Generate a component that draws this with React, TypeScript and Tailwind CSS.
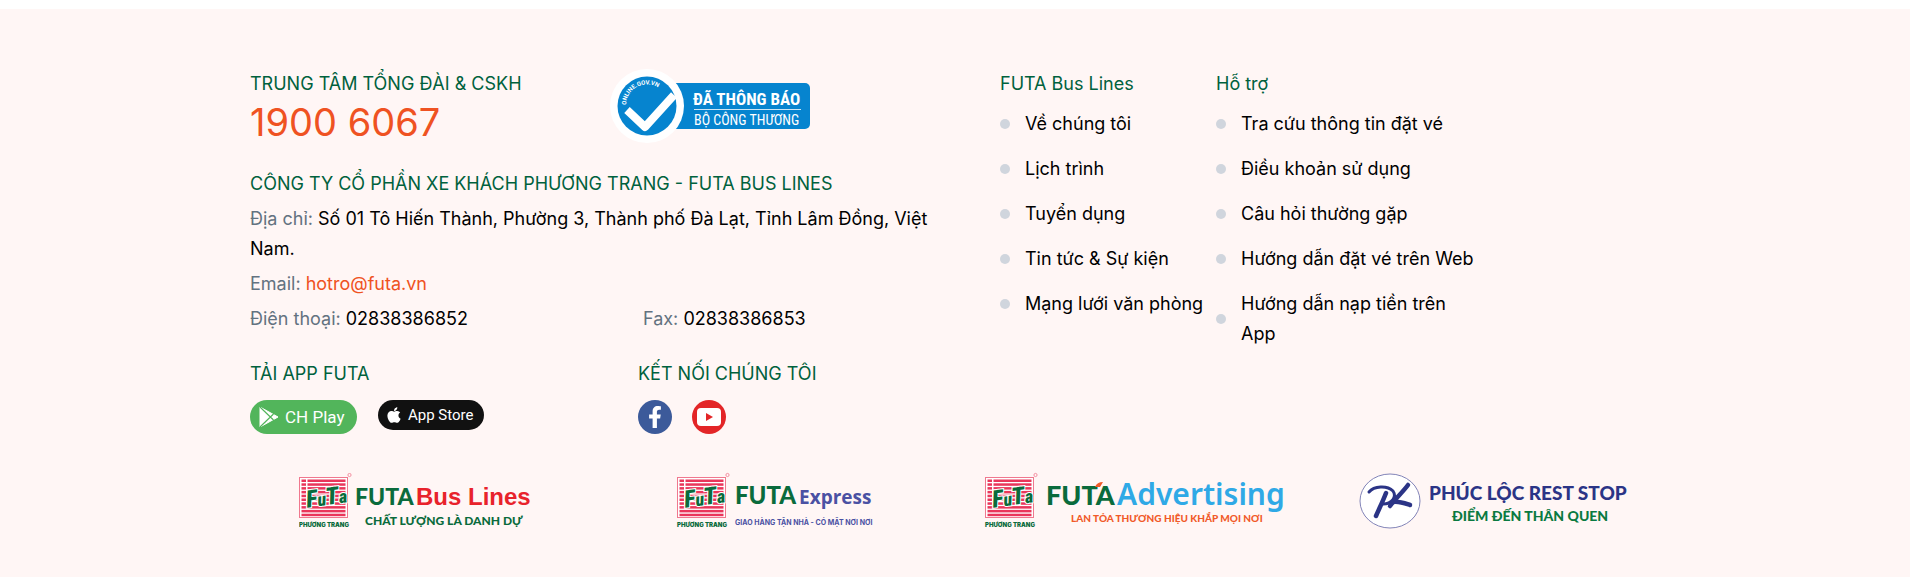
import React from "react";
import { FaApple, FaFacebookF } from "react-icons/fa";

const companyLinks = ["Về chúng tôi", "Lịch trình", "Tuyển dụng", "Tin tức & Sự kiện", "Mạng lưới văn phòng"];
const supportLinks = [
  "Tra cứu thông tin đặt vé",
  "Điều khoản sử dụng",
  "Câu hỏi thường gặp",
  "Hướng dẫn đặt vé trên Web",
  "Hướng dẫn nạp tiền trên App",
];

function LinkList({ title, links, width }: { title: string; links: string[]; width: string }) {
  return (
    <nav aria-label={title} className={width}>
      <h2 className="text-[#00613d]">{title}</h2>
      <ul className="mt-[10px] flex flex-col gap-[15px]">
        {links.map((label) => (
          <li key={label} className="flex items-center gap-[15px]">
            <span className="size-[10px] shrink-0 rounded-full bg-[#d0d5dd]" />
            <a href="#" className="text-black">
              {label}
            </a>
          </li>
        ))}
      </ul>
    </nav>
  );
}

function CertifiedBadge() {
  return (
    <svg width="202" height="74" viewBox="0 0 202 74" role="img" aria-label="Đã thông báo Bộ Công Thương">
      <defs>
        <path id="badge-arc" d="M16 36 A21 21 0 0 1 57 30" />
      </defs>
      <rect x="60" y="14" width="140" height="46" rx="5" fill="#0684cf" />
      <circle cx="37" cy="37" r="37" fill="#fff" />
      <circle cx="37" cy="37" r="29.5" fill="#0684cf" />
      <text fontFamily="Roboto, sans-serif" fontSize="6" fontWeight="700" fill="#fff">
        <textPath href="#badge-arc">ONLINE.GOV.VN</textPath>
      </text>
      <path d="M17 41 L35 58 L64 26" fill="none" stroke="#fff" strokeWidth="8" strokeLinejoin="round" />
      <text x="83" y="36" fontFamily="'Roboto Condensed', Roboto, sans-serif" fontSize="17" fontWeight="700" fill="#fff">
        ĐÃ THÔNG BÁO
      </text>
      <rect x="84" y="40" width="107" height="1" fill="#fff" opacity="0.8" />
      <text x="84" y="56" fontFamily="'Roboto Condensed', Roboto, sans-serif" fontSize="14" fill="#fff">
        BỘ CÔNG THƯƠNG
      </text>
    </svg>
  );
}

function FutaEmblem() {
  const stripes = Array.from({ length: 10 }, (_, i) => 6.5 + i * 3.8);
  return (
    <g>
      <rect x="0.5" y="4.5" width="48" height="40" fill="#fff" stroke="#f0788e" />
      {stripes.map((y) => (
        <rect key={y} x="2.5" y={y} width="44" height="2.5" fill="#e9365a" />
      ))}
      <rect x="7" y="6" width="1.5" height="26" fill="#fff" />
      <g transform="rotate(-8 28 24)">
        <text
          x="7"
          y="32"
          fontFamily="'Roboto Condensed', Roboto, sans-serif"
          fontSize="24"
          fontWeight="900"
          fontStyle="italic"
          fill="#0a6b3c"
          stroke="#fff"
          strokeWidth="2"
          paintOrder="stroke"
        >
          F<tspan fontSize="18">u</tspan>T<tspan fontSize="18">a</tspan>
        </text>
      </g>
      <text x="0" y="54" fontFamily="Inter, sans-serif" fontSize="6" fontWeight="900" fill="#0a6b3c">
        PHƯƠNG TRANG
      </text>
      <circle cx="50.5" cy="2" r="1.6" fill="none" stroke="#f0788e" strokeWidth="0.8" />
    </g>
  );
}

function BusLinesLogo() {
  return (
    <svg width="232" height="56" viewBox="0 0 232 56" role="img" aria-label="FUTA Bus Lines">
      <FutaEmblem />
      <text x="56" y="32" fontFamily="Lato, sans-serif" fontSize="23" fontWeight="900" fill="#0a6b3c">
        FUTA
      </text>
      <text x="117" y="32" fontFamily="'Liberation Sans', sans-serif" fontSize="24" fontWeight="700" fill="#e8222b">
        Bus Lines
      </text>
      <text x="66" y="52" fontFamily="Lato, sans-serif" fontSize="12" fontWeight="900" fill="#0a6b3c">
        CHẤT LƯỢNG LÀ DANH DỰ
      </text>
    </svg>
  );
}

function ExpressLogo() {
  return (
    <svg width="196" height="56" viewBox="0 0 196 56" role="img" aria-label="FUTA Express" className="overflow-visible">
      <FutaEmblem />
      <text x="58" y="31" fontFamily="Lato, sans-serif" fontSize="24" fontWeight="900" fill="#0a6b3c">
        FUTA
      </text>
      <text x="122" y="31" fontFamily="'Open Sans', sans-serif" fontSize="19" fontWeight="700" fill="#4a51a3">
        Express
      </text>
      <text x="58" y="52" fontFamily="Inter, sans-serif" fontSize="7" fontWeight="700" fill="#4a51a3">
        GIAO HÀNG TẬN NHÀ - CÓ MẶT NƠI NƠI
      </text>
    </svg>
  );
}

function AdvertisingLogo() {
  return (
    <svg width="300" height="56" viewBox="0 0 300 56" role="img" aria-label="FUTA Advertising" className="overflow-visible">
      <FutaEmblem />
      <text x="61" y="32" fontFamily="Lato, sans-serif" fontSize="27" fontWeight="900" fill="#0a6b3c">
        FUTA
      </text>
      <path d="M110 14 q2 -5 8 -5 l-3 5 z" fill="#f15a29" />
      <text x="132" y="32" fontFamily="'Noto Sans', sans-serif" fontSize="30" fontWeight="600" fill="#2fa9e6">
        Advertising
      </text>
      <text x="86" y="49" fontFamily="Lato, sans-serif" fontSize="10" fontWeight="900" fill="#f15a29">
        LAN TỎA THƯƠNG HIỆU KHẮP MỌI NƠI
      </text>
    </svg>
  );
}

function RestStopLogo() {
  return (
    <svg width="272" height="56" viewBox="0 0 272 56" role="img" aria-label="Phúc Lộc Rest Stop">
      <ellipse cx="31" cy="28" rx="30" ry="27" fill="#fff" stroke="#8284b8" />
      <g fill="none" stroke="#2b3486" strokeLinecap="round" strokeLinejoin="round">
        <path d="M10 19 C15 13 28 12 34 18 C38 24 33 31 24 31" strokeWidth="3" />
        <path d="M27 20 C24 28 20 36 17 43" strokeWidth="4.5" />
        <path d="M49 12 C43 20 36 26 31 33" strokeWidth="4.5" />
        <path d="M34 29 C40 28 45 30 51 32" strokeWidth="4.5" />
      </g>
      <text x="70" y="27" fontFamily="Lato, sans-serif" fontSize="19" fontWeight="900" fill="#2b3486">
        PHÚC LỘC REST STOP
      </text>
      <text x="93" y="48" fontFamily="Lato, sans-serif" fontSize="14" fontWeight="900" fill="#0a7a41">
        ĐIỂM ĐẾN THÂN QUEN
      </text>
    </svg>
  );
}

export default function App() {
  return (
    <div className="bg-white pt-[9px] font-['Inter',sans-serif] text-[18px] leading-[30px]">
      <footer className="bg-[#fff6f5] px-6 pt-[60px] pb-[48px]">
        <div className="mx-auto max-w-[1410px]">
          <div className="flex">
            <div className="w-[690px] shrink-0">
              <div className="flex h-[100px]">
                <div className="w-[360px]">
                  <h2 className="text-[#00613d]">TRUNG TÂM TỔNG ĐÀI &amp; CSKH</h2>
                  <a href="tel:19006067" className="block text-[38px] leading-[46px] text-[#ef5222]">
                    1900 6067
                  </a>
                </div>
                <a href="#">
                  <CertifiedBadge />
                </a>
              </div>
              <address className="flex flex-col gap-[5px] not-italic">
                <h2 className="text-[#00613d]">CÔNG TY CỔ PHẦN XE KHÁCH PHƯƠNG TRANG - FUTA BUS LINES</h2>
                <p>
                  <span className="text-[#637280]">Địa chỉ: </span>
                  Số 01 Tô Hiến Thành, Phường 3, Thành phố Đà Lạt, Tỉnh Lâm Đồng, Việt Nam.
                </p>
                <p>
                  <span className="text-[#637280]">Email: </span>
                  <a href="mailto:hotro@futa.vn" className="text-[#ef5222]">
                    hotro@futa.vn
                  </a>
                </p>
                <div className="flex">
                  <p className="w-[393px]">
                    <span className="text-[#637280]">Điện thoại: </span>02838386852
                  </p>
                  <p>
                    <span className="text-[#637280]">Fax: </span>02838386853
                  </p>
                </div>
              </address>
              <div className="mt-[25px] flex">
                <section className="w-[388px]">
                  <h2 className="text-[#00613d]">TẢI APP FUTA</h2>
                  <div className="mt-[11px] flex items-start gap-[21px]">
                    <a
                      href="#"
                      className="flex h-[34px] w-[107px] items-center gap-[6px] rounded-full bg-[#52b55b] pl-[9px] font-['Roboto',sans-serif] text-[17px] text-white"
                    >
                      <svg width="20" height="20" viewBox="0 0 20 20" aria-hidden="true">
                        <path d="M1 0 L19 10 L1 20 Z" fill="#fff" stroke="#fff" strokeLinejoin="round" />
                        <path d="M1 0 L14.5 13 M1 20 L14.5 7" stroke="#52b55b" strokeWidth="1.2" />
                      </svg>
                      CH Play
                    </a>
                    <a
                      href="#"
                      className="flex h-[30px] w-[106px] items-center gap-[5px] rounded-full bg-[#111111] pl-[7px] font-['Roboto',sans-serif] text-[15px] text-white"
                    >
                      <FaApple size={18} />
                      App Store
                    </a>
                  </div>
                </section>
                <section>
                  <h2 className="text-[#00613d]">KẾT NỐI CHÚNG TÔI</h2>
                  <div className="mt-[11px] flex gap-[20px]">
                    <a
                      href="#"
                      aria-label="Facebook"
                      className="flex size-[34px] items-center justify-center rounded-full bg-[#3c5a9a] text-white"
                    >
                      <FaFacebookF size={22} />
                    </a>
                    <a
                      href="#"
                      aria-label="YouTube"
                      className="flex size-[34px] items-center justify-center rounded-full bg-[#e32527]"
                    >
                      <svg width="24" height="18" viewBox="0 0 24 18" aria-hidden="true">
                        <rect width="24" height="18" rx="4" fill="#fff" />
                        <path d="M9 5 L16 9 L9 13 Z" fill="#e32527" />
                      </svg>
                    </a>
                  </div>
                </section>
              </div>
            </div>
            <div className="ml-[60px] flex">
              <LinkList title="FUTA Bus Lines" links={companyLinks} width="w-[216px]" />
              <LinkList title="Hỗ trợ" links={supportLinks} width="w-[264px]" />
            </div>
          </div>
          <div className="-mx-[15px] mt-[39px] grid grid-cols-4 justify-items-center">
            <BusLinesLogo />
            <ExpressLogo />
            <AdvertisingLogo />
            <RestStopLogo />
          </div>
        </div>
      </footer>
    </div>
  );
}
